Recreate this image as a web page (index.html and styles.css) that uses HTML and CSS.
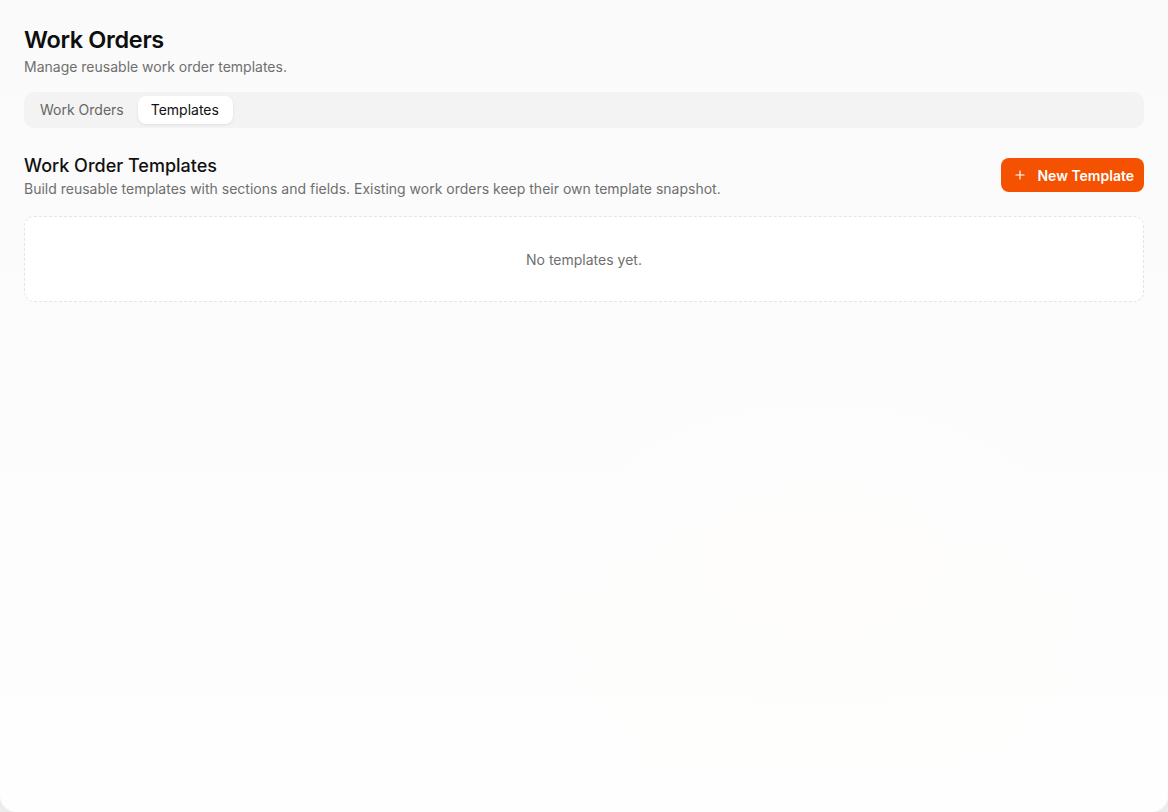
FILE: index.html
```html
<!DOCTYPE html>
<html lang="en">
<head>
<meta charset="utf-8">
<title>Work Orders</title>
<link rel="stylesheet" href="styles.css">
</head>
<body>
<main class="panel">
  <header class="page-head">
    <h1 class="page-title">Work Orders</h1>
    <p class="page-sub">Manage reusable work order templates.</p>
  </header>
  <nav class="tabs">
    <button class="tab">Work Orders</button>
    <button class="tab tab-active">Templates</button>
  </nav>
  <section class="section">
    <div class="section-head">
      <div>
        <h2 class="section-title">Work Order Templates</h2>
        <p class="section-sub">Build reusable templates with sections and fields. Existing work orders keep their own template snapshot.</p>
      </div>
      <button class="btn-primary">
        <svg width="14" height="14" viewBox="0 0 24 24" fill="none" stroke="currentColor" stroke-width="2" stroke-linecap="round"><path d="M12 5v14M5 12h14"/></svg>
        <span>New Template</span>
      </button>
    </div>
    <div class="empty">No templates yet.</div>
  </section>
</main>
</body>
</html>
```
FILE: styles.css
```css
* { box-sizing: border-box; }
html, body { margin: 0; height: 100%; background: #ececec; }
body {
  font-family: Inter, "Noto Sans", "Liberation Sans", sans-serif;
  color: #111;
}
.panel {
  height: 812px;
  padding: 26px 24px 24px 24px;
  border-radius: 0 0 16px 16px;
  background:
    radial-gradient(ellipse 480px 300px at 820px 560px, #fefdfc 0%, rgba(254,253,252,0) 100%),
    linear-gradient(180deg, #fafafa 0%, #fcfcfc 45%, #fefefe 100%);
}
.page-title {
  margin: 0;
  font-size: 23.5px;
  line-height: 28px;
  font-weight: 600;
  letter-spacing: -0.35px;
  color: #0e0e0e;
}
.page-sub {
  margin: 4px 0 0 0;
  font-size: 14px;
  line-height: 18px;
  color: #6f6f6f;
}
.tabs {
  margin-top: 16px;
  height: 36px;
  background: #f3f3f3;
  border-radius: 10px;
  padding: 4px 4px;
  display: flex;
  align-items: center;
  gap: 2px;
}
.tab {
  font-family: inherit;
  font-size: 14px;
  border: 0;
  background: transparent;
  color: #666;
  padding: 0 12px;
  height: 28px;
  border-radius: 8px;
  cursor: pointer;
  line-height: 26px;
}
.tab-active {
  background: #ffffff;
  color: #111;
  padding: 0 14px 0 13px;
  box-shadow: 0 1px 3px rgba(0,0,0,0.08);
}
.section { margin-top: 27px; }
.section-head {
  display: flex;
  justify-content: space-between;
  align-items: flex-start;
}
.section-title {
  margin: 0;
  font-size: 18px;
  line-height: 22px;
  font-weight: 500;
  color: #111;
}
.section-sub {
  margin: 3px 0 0 0;
  font-size: 14px;
  line-height: 18px;
  color: #6f6f6f;
}
.btn-primary {
  margin-top: 3px;
  display: flex;
  align-items: center;
  gap: 10px;
  height: 34px;
  padding: 0 10px 0 12px;
  border: 0;
  border-radius: 8px;
  background: #f45200;
  color: #fff;
  font-family: inherit;
  font-size: 14px;
  font-weight: 600;
  cursor: pointer;
}
.empty {
  margin-top: 18px;
  height: 86px;
  border: 1px dashed #e4e4e4;
  border-radius: 10px;
  background: #ffffff;
  display: flex;
  align-items: center;
  justify-content: center;
  font-size: 14px;
  color: #6f6f6f;
}
```
